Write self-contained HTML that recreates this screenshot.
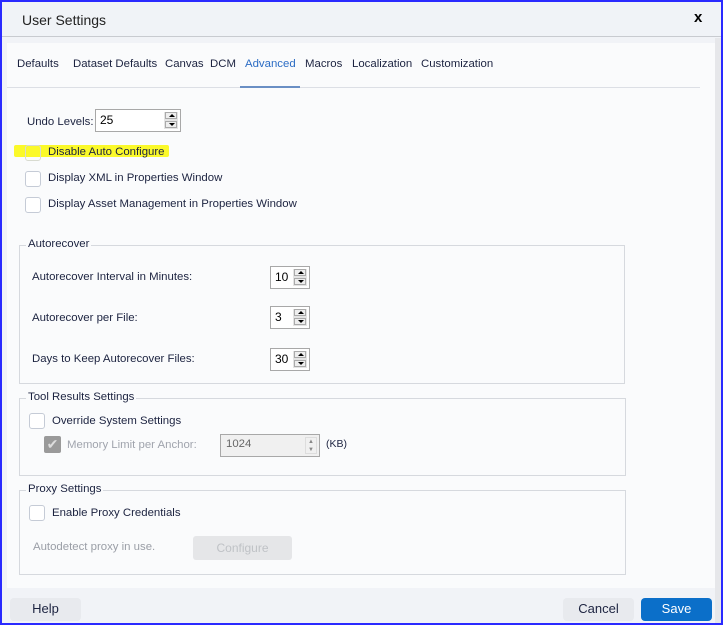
<!DOCTYPE html>
<html><head><meta charset="utf-8"><style>
*{box-sizing:border-box;margin:0;padding:0}
body{width:723px;height:625px;overflow:hidden;background:#fff;font-family:"Liberation Sans",sans-serif;font-size:11.4px;color:#1c2340;position:relative}
.a{position:absolute;white-space:nowrap}
.win{position:absolute;left:0;top:0;width:723px;height:625px;border:2px solid #2a2aff;background:#f1f3f7}
.cb{position:absolute;width:16px;height:16px;border:1px solid #c5cbd6;border-radius:3px;background:#fff}
.sp{position:absolute;height:23px;border:1px solid #a8a8a8;background:#fff;font-size:12px;color:#000;padding:3px 0 0 4px}
.sp .b{position:absolute;right:2px;top:2px;width:14px;height:17px;background:#e4e4e4}
.sp .b i{position:absolute;left:1px;width:12px;height:7px;border:1px solid #aaa;background:#eee}
.sp .b i:after{content:"";position:absolute;left:3px;border-left:3px solid transparent;border-right:3px solid transparent}
.sp .b i.u{top:0}.sp .b i.u:after{top:1px;border-bottom:3px solid #000}
.sp .b i.d{top:9px}.sp .b i.d:after{top:1px;border-top:3px solid #000}
.gb{position:absolute;border:1px solid #d6d9de}
.gt{position:absolute;background:#fafbfc;padding:0 2px}
</style></head><body>
<div class="win"></div>
<div class="a" style="left:2px;top:2px;width:719px;height:35px;background:#f0f3f7;border-bottom:1px solid #c8cbd0"></div>
<div class="a" style="left:22px;top:12px;font-size:14px;color:#222">User Settings</div>
<div class="a" style="left:694px;top:9px;font-size:15px;font-weight:bold;color:#000">x</div>
<div class="a" style="left:715px;top:38px;width:6px;height:585px;background:#e6e7ea"></div>
<div class="a" style="left:7px;top:43px;width:708px;height:545px;background:#fafbfc"></div>
<div class="a" style="left:7px;top:87px;width:693px;height:1px;background:#dcdfe5"></div>
<div class="a" style="left:17px;top:58px">Defaults</div>
<div class="a" style="left:73px;top:58px">Dataset Defaults</div>
<div class="a" style="left:165px;top:58px">Canvas</div>
<div class="a" style="left:210px;top:58px">DCM</div>
<div class="a" style="left:245px;top:58px;color:#2b6cc4">Advanced</div>
<div class="a" style="left:240px;top:86px;width:60px;height:2px;background:#6a8fc4"></div>
<div class="a" style="left:305px;top:58px">Macros</div>
<div class="a" style="left:352px;top:58px">Localization</div>
<div class="a" style="left:421px;top:58px">Customization</div>

<div class="a" style="left:27px;top:116px">Undo Levels:</div>
<div class="sp" style="left:95px;top:109px;width:86px"><span>25</span><div class="b"><i class="u"></i><i class="d"></i></div></div>
<div class="a" style="left:14px;top:145px;width:155px;height:12px;background:#fbf92a;border-radius:2px"></div>
<div class="cb" style="left:25px;top:145px;background:transparent;border-color:#d8dbd0"></div>
<div class="a" style="left:48px;top:146px">Disable Auto Configure</div>
<div class="cb" style="left:25px;top:171px"></div>
<div class="a" style="left:48px;top:172px">Display XML in Properties Window</div>
<div class="cb" style="left:25px;top:197px"></div>
<div class="a" style="left:48px;top:198px">Display Asset Management in Properties Window</div>

<div class="gb" style="left:19px;top:245px;width:606px;height:139px"></div>
<div class="gt" style="left:26px;top:238px">Autorecover</div>
<div class="a" style="left:32px;top:271px">Autorecover Interval in Minutes:</div>
<div class="sp" style="left:270px;top:266px;width:40px"><span>10</span><div class="b"><i class="u"></i><i class="d"></i></div></div>
<div class="a" style="left:32px;top:312px">Autorecover per File:</div>
<div class="sp" style="left:270px;top:306px;width:40px"><span>3</span><div class="b"><i class="u"></i><i class="d"></i></div></div>
<div class="a" style="left:32px;top:353px">Days to Keep Autorecover Files:</div>
<div class="sp" style="left:270px;top:348px;width:40px"><span>30</span><div class="b"><i class="u"></i><i class="d"></i></div></div>

<div class="gb" style="left:19px;top:398px;width:607px;height:78px"></div>
<div class="gt" style="left:26px;top:391px">Tool Results Settings</div>
<div class="cb" style="left:29px;top:413px"></div>
<div class="a" style="left:52px;top:415px">Override System Settings</div>
<div class="a" style="left:44px;top:436px;width:17px;height:17px;background:#9a9a9a;border-radius:2px;color:#ddd;font-size:14px;text-align:center;line-height:17px">✔</div>
<div class="a" style="left:67px;top:439px;color:#a0a4ad">Memory Limit per Anchor:</div>
<div class="a" style="left:220px;top:434px;width:100px;height:23px;border:1px solid #a8a8a8;background:#f0f0f0;color:#666;padding:3px 0 0 5px">1024
<div style="position:absolute;right:2px;top:2px;width:12px;height:17px;border:1px solid #ddd;font-size:6px;color:#888;text-align:center;line-height:8px">▲<br>▼</div></div>
<div class="a" style="left:326px;top:438px;font-size:10.5px">(KB)</div>

<div class="gb" style="left:19px;top:490px;width:607px;height:85px"></div>
<div class="gt" style="left:26px;top:483px">Proxy Settings</div>
<div class="cb" style="left:29px;top:505px"></div>
<div class="a" style="left:52px;top:507px">Enable Proxy Credentials</div>
<div class="a" style="left:33px;top:541px;color:#9a9ea6">Autodetect proxy in use.</div>
<div class="a" style="left:193px;top:536px;width:99px;height:24px;background:#e5e6e8;border-radius:3px;color:#bfc2c6;text-align:center;line-height:24px;font-size:12px">Configure</div>

<div class="a" style="left:10px;top:598px;width:71px;height:23px;background:#e8eaee;border-radius:4px;text-align:center;line-height:22px;font-size:13px">Help</div>
<div class="a" style="left:563px;top:598px;width:71px;height:23px;background:#e8eaee;border-radius:4px;text-align:center;line-height:22px;font-size:13px">Cancel</div>
<div class="a" style="left:641px;top:598px;width:71px;height:23px;background:#0b6fc9;border-radius:4px;text-align:center;line-height:22px;font-size:13px;color:#fff">Save</div>
</body></html>
